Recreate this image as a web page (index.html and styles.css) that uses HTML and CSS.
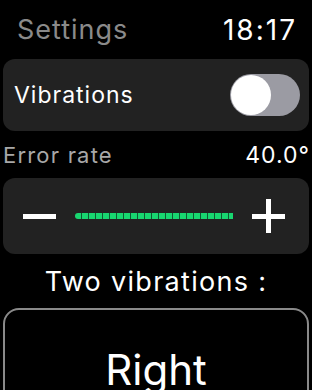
FILE: index.html
```html
<!DOCTYPE html>
<html>
<head>
<meta charset="utf-8">
<link rel="stylesheet" href="styles.css">
</head>
<body>
<div class="screen">
  <div class="header">
    <span class="title">Settings</span>
    <span class="time">18:17</span>
  </div>
  <div class="card toggle-card">
    <span class="label">Vibrations</span>
    <div class="switch"><div class="knob"></div></div>
  </div>
  <div class="rate-row">
    <span class="rate-label">Error rate</span>
    <span class="rate-value">40.0°</span>
  </div>
  <div class="card slider-card">
    <div class="minus"></div>
    <div class="track"></div>
    <div class="plus"></div>
  </div>
  <div class="section">Two vibrations :</div>
  <div class="choice">
    <span class="choice-text">Right</span>
  </div>
</div>
</body>
</html>
```
FILE: styles.css
```css
html, body {
  margin: 0;
  padding: 0;
  background: #000;
}
body {
  width: 312px;
  height: 390px;
  overflow: hidden;
  font-family: Inter, "Noto Sans", sans-serif;
  color: #fff;
}
.screen {
  display: flex;
  flex-direction: column;
  padding: 0 3px;
  height: 390px;
  overflow: hidden;
}
.header {
  flex: none;
  height: 59px;
  display: flex;
  justify-content: space-between;
  align-items: center;
  padding: 0 14px 0 14px;
  font-size: 27px;
}
.title {
  color: #8a8a8a;
  letter-spacing: 1px;
}
.time {
  color: #fff;
  font-size: 28px;
  letter-spacing: 2px;
  margin-right: -2px;
}
.card {
  background: #222222;
  border-radius: 12px;
}
.toggle-card {
  flex: none;
  height: 72px;
  display: flex;
  align-items: center;
  justify-content: space-between;
  padding: 0 9px 0 11px;
  font-size: 23px;
  letter-spacing: 1px;
}
.switch {
  width: 68px;
  height: 42px;
  border-radius: 21px;
  background: #9b9ba3;
  display: flex;
  align-items: center;
  padding: 0 1px;
}
.knob {
  width: 40px;
  height: 40px;
  border-radius: 50%;
  background: #fff;
}
.rate-row {
  flex: none;
  height: 47px;
  display: flex;
  justify-content: space-between;
  align-items: center;
  font-size: 22px;
}
.rate-label {
  color: #a8a8a8;
  letter-spacing: 1.2px;
}
.rate-value {
  font-size: 23px;
  letter-spacing: 1px;
  margin-right: -1px;
}
.slider-card {
  flex: none;
  height: 76px;
  display: flex;
  align-items: center;
  padding: 0 20px;
  gap: 19px;
}
.minus {
  width: 33px;
  height: 5px;
  background: #fff;
}
.track {
  width: 158px;
  height: 6px;
  border-radius: 3px 0 0 3px;
  background: repeating-linear-gradient(90deg, #18d670 0 6px, #0c5a30 6px 7px);
}
.plus {
  width: 33px;
  height: 34px;
  background:
    linear-gradient(#fff, #fff) center / 33px 5px no-repeat,
    linear-gradient(#fff, #fff) center / 5px 34px no-repeat;
}
.section {
  flex: none;
  height: 54px;
  display: flex;
  align-items: center;
  justify-content: center;
  font-size: 27px;
  letter-spacing: 1.3px;
}
.choice {
  flex: none;
  height: 120px;
  border: 2px solid #8a8a8a;
  border-radius: 16px;
  display: flex;
  justify-content: center;
  padding-top: 34px;
}
.choice-text {
  font-size: 42px;
}
```
